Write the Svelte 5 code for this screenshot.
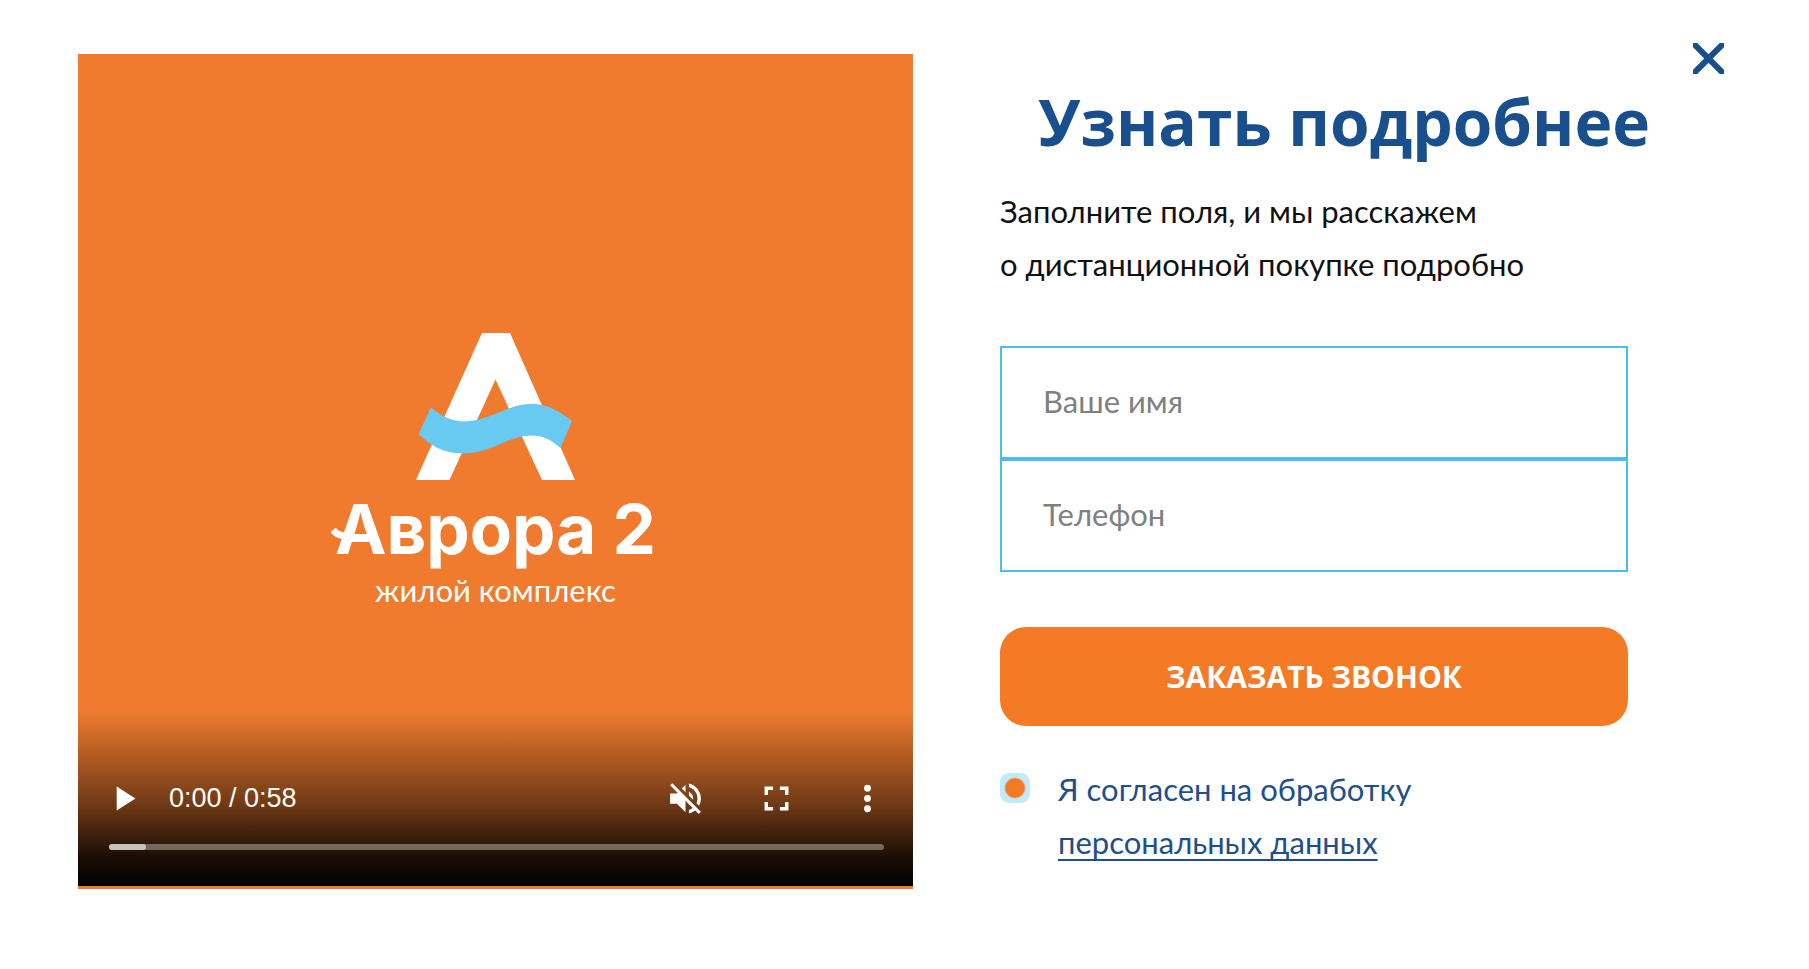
<script>
	let name = $state('');
	let phone = $state('');
	let agreed = $state(true);
	let open = $state(true);

	const submit = (event) => event.preventDefault();
</script>

{#if open}
	<main class="dialog">
		<section class="player" aria-label="Видео">
			<div class="logo">
				<svg class="mark" viewBox="0 0 159 147" aria-hidden="true">
					<path
						fill="#fff"
						d="M66 0h28l65 147h-33L79.500 46.500 33.500 147H0z"
					/>
					<path
						fill="#68c9f1"
						d="M15 74.500C31 88 44 90 58 87.500C78 84.500 93 71 116 71C133 71 144 79 156 88L144.500 115C134 106 127 102.500 115 102.500C92 102.500 75 120.500 47 120.500C27 120.500 14 112 2.500 101z"
					/>
				</svg>
				<div class="brand">
					<svg class="swoosh" viewBox="0 0 24 14" aria-hidden="true">
						<path d="M2 3C8 10 14 9 23 8" fill="none" stroke="#fff" stroke-width="7" />
					</svg>
					Аврора 2
				</div>
				<div class="tagline">жилой комплекс</div>
			</div>

			<div class="controls">
				<div class="row">
					<button class="control" aria-label="Воспроизвести">
						<svg viewBox="0 0 24 24"><path d="M8 5v14l11-7z" /></svg>
					</button>
					<span class="time">0:00 / 0:58</span>
					<button class="control" aria-label="Включить звук">
						<svg viewBox="0 0 24 24">
							<mask id="slash">
								<path fill="#fff" d="M0 0h24v24H0z" />
								<path stroke="#000" stroke-width="2.600" d="M4.300 2.500l18 18" />
							</mask>
							<path
								mask="url(#slash)"
								d="M3 9v6h4l5 5V4L7 9H3zm13.500 3c0-1.770-1.020-3.290-2.500-4.030v8.050c1.480-.730 2.500-2.250 2.500-4.020zM14 3.230v2.060c2.890.860 5 3.540 5 6.710s-2.110 5.850-5 6.710v2.060c4.010-.910 7-4.490 7-8.770s-2.990-7.860-7-8.770z"
							/>
							<path d="M4.270 3L3 4.270 19.730 21 21 19.730z" />
						</svg>
					</button>
					<button class="control" aria-label="На весь экран">
						<svg viewBox="0 0 24 24">
							<path
								d="M7 14H5v5h5v-2H7v-3zm-2-4h2V7h3V5H5v5zm12 7h-3v2h5v-5h-2v3zM14 5v2h3v3h2V5h-5z"
							/>
						</svg>
					</button>
					<button class="control" aria-label="Ещё">
						<svg viewBox="0 0 24 24">
							<circle cx="12" cy="6" r="2" />
							<circle cx="12" cy="12" r="2" />
							<circle cx="12" cy="18" r="2" />
						</svg>
					</button>
				</div>
				<div class="timeline"><div class="buffered"></div></div>
			</div>
		</section>

		<section class="content">
			<h1>Узнать подробнее</h1>
			<p>Заполните поля, и мы расскажем<br />о дистанционной покупке подробно</p>

			<form onsubmit={submit}>
				<input class="field" type="text" placeholder="Ваше имя" aria-label="Ваше имя" bind:value={name} />
				<input class="field" type="tel" placeholder="Телефон" aria-label="Телефон" bind:value={phone} />
				<button class="submit" type="submit">Заказать звонок</button>
				<div class="agree">
					<input id="agree" type="checkbox" bind:checked={agreed} />
					<label for="agree">Я согласен на обработку<br /><a href="#policy">персональных данных</a></label>
				</div>
			</form>
		</section>

		<button class="close" aria-label="Закрыть" onclick={() => (open = false)}>
			<svg viewBox="0 0 31 31"><path d="M2 2l27 27M29 2L2 29" /></svg>
		</button>
	</main>
{/if}

<style>
	:global(body) {
		background: #fff;
	}

	.dialog {
		position: relative;
		display: grid;
		grid-template-columns: minmax(0, 835fr) minmax(0, 724fr);
		column-gap: 87px;
		align-items: start;
		padding: 54px 85px 54px 78px;
		font-family: Lato, 'Noto Sans', sans-serif;
		font-size: 31px;
		line-height: 53px;
		color: #111;
	}

	button {
		padding: 0;
		border: none;
		background: none;
		font: inherit;
		cursor: pointer;
	}

	.player {
		display: flex;
		flex-direction: column;
		justify-content: space-between;
		aspect-ratio: 1;
		padding-bottom: 3px;
		box-sizing: border-box;
		background: #f07b2e;
		color: #fff;
	}

	.logo {
		display: flex;
		flex-direction: column;
		align-items: center;
		padding-top: 279px;
	}

	.mark {
		width: 159px;
		height: 147px;
	}

	.brand {
		position: relative;
		margin-top: 11px;
		font-family: Inter, sans-serif;
		font-size: 69px;
		font-weight: 700;
		line-height: 76px;
	}

	.swoosh {
		position: absolute;
		left: -4px;
		top: 36px;
		width: 24px;
		height: 14px;
	}

	.tagline {
		margin-top: 5px;
		line-height: 36px;
	}

	.controls {
		padding-top: 42px;
		background: linear-gradient(
			transparent,
			rgba(0, 0, 0, 0.36) 36%,
			rgba(0, 0, 0, 0.55) 55%,
			rgba(0, 0, 0, 0.78) 74%,
			rgba(0, 0, 0, 0.87) 82%,
			#000
		);
	}

	.row {
		display: flex;
		align-items: center;
	}

	.control {
		display: flex;
		justify-content: center;
		align-items: center;
		width: 91px;
		height: 91px;
	}

	.control svg {
		width: 41px;
		height: 41px;
		fill: #fff;
	}

	.time {
		flex: 1;
		font-family: 'Liberation Sans', Arial, sans-serif;
		font-size: 27px;
	}

	.timeline {
		height: 6px;
		margin: 0 29px 36px 31px;
		border-radius: 3px;
		background: rgba(255, 255, 255, 0.35);
	}

	.buffered {
		width: 37px;
		height: 6px;
		border-radius: 3px;
		background: rgba(255, 255, 255, 0.6);
	}

	.content {
		padding: 28px 96px 0 0;
	}

	h1 {
		margin: 0 0 23px 38px;
		font-family: 'Open Sans', 'Noto Sans', sans-serif;
		font-size: 64px;
		line-height: 80px;
		font-weight: 700;
		white-space: nowrap;
		color: #184f8c;
	}

	p {
		margin: 0 0 55px;
		white-space: nowrap;
	}

	form {
		display: flex;
		flex-direction: column;
	}

	.field {
		box-sizing: border-box;
		width: 100%;
		height: 113px;
		padding: 0 41px 4px;
		border: 2px solid #4bbdf0;
		border-radius: 0;
		background: #fff;
		font: inherit;
	}

	.field::placeholder {
		color: #808080;
	}

	.submit {
		height: 99px;
		margin: 55px 0 37px;
		border-radius: 26px;
		background: #f47a25;
		color: #fff;
		font-family: 'Open Sans', 'Noto Sans', sans-serif;
		font-size: 30px;
		font-weight: 700;
		text-transform: uppercase;
	}

	.agree {
		display: flex;
		gap: 28px;
		color: #1f4f8b;
	}

	.agree input {
		appearance: none;
		flex: none;
		width: 30px;
		height: 30px;
		margin: 10px 0 0;
		border-radius: 9px;
		background: #c1ebfd;
	}

	.agree input:checked {
		background: radial-gradient(circle, #f47a25 9px, #c1ebfd 11px);
	}

	.agree a {
		color: inherit;
		text-decoration-thickness: 2px;
		text-underline-offset: 5px;
	}

	.close {
		position: absolute;
		top: 43px;
		right: 85px;
		width: 31px;
		height: 31px;
	}

	.close svg {
		display: block;
		fill: none;
		stroke: #184f8c;
		stroke-width: 6;
		stroke-linecap: round;
	}
</style>
